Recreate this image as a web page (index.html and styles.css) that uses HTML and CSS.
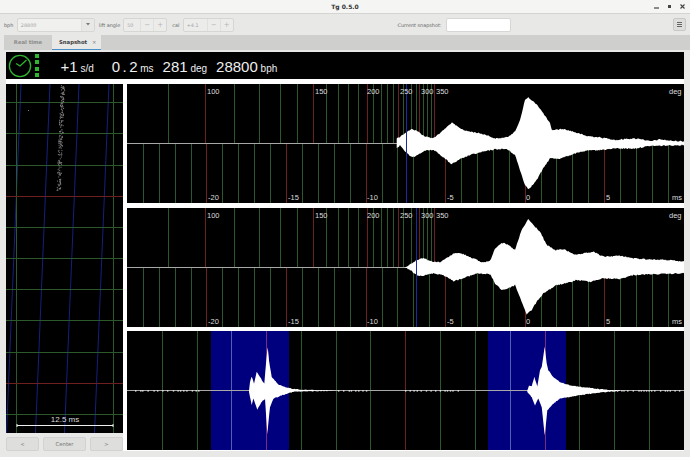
FILE: index.html
```html
<!DOCTYPE html>
<html lang="en">

<head>
    <meta charset="UTF-8">
    <title>Tg 0.5.0</title>
    <link rel="stylesheet" href="styles.css">
</head>

<body>
    <div class="titlebar">
        <span class="title">Tg 0.5.0</span>
        <div class="win-buttons">
            <svg width="5" height="5" viewBox="0 0 5 5"><path d="M0 4H5" stroke="#444" stroke-width="1.2"/></svg>
            <svg width="5" height="5" viewBox="0 0 5 5"><rect x="1" y="1" width="3" height="3" fill="#444"/></svg>
            <svg width="5" height="5" viewBox="0 0 5 5"><path d="M0.5 0.5L4.5 4.5M4.5 0.5L0.5 4.5" stroke="#444" stroke-width="1.1"/></svg>
        </div>
    </div>

    <div class="toolbar">
        <label class="tool-label">bph</label>
        <div class="field combo">
            <span class="field-value">28800</span>
            <span class="field-btn combo-arrow">
                <svg width="4" height="3" viewBox="0 0 4 3"><path d="M0 0H4L2 2.5Z" fill="#777"/></svg>
            </span>
        </div>
        <label class="tool-label lift">lift angle</label>
        <div class="field spin angle">
            <span class="field-value">50</span>
            <span class="field-btn">−</span>
            <span class="field-btn">+</span>
        </div>
        <label class="tool-label cal">cal</label>
        <div class="field spin caldata">
            <span class="field-value">+4.1</span>
            <span class="field-btn">−</span>
            <span class="field-btn">+</span>
        </div>
        <div class="tool-spacer"></div>
        <label class="tool-label">Current snapshot:</label>
        <input class="snapshot-name" type="text">
        <button class="menu-btn">
            <svg width="5" height="5" viewBox="0 0 5 5"><path d="M0 .5H5M0 2.5H5M0 4.5H5" stroke="#666"/></svg>
        </button>
    </div>

    <div class="tabs">
        <div class="tab">Real time</div>
        <div class="tab active">Snapshot <span class="tab-close">×</span></div>
    </div>

    <div class="content">
        <div class="status">
            <svg class="clock" width="24" height="24" viewBox="0 0 24 24">
                <circle cx="12" cy="12" r="10.6" fill="none" stroke="#2fb52f" stroke-width="1.3"/>
                <path d="M8 9.5L12 12L18.5 6" fill="none" stroke="#2fb52f" stroke-width="1.3"/>
            </svg>
            <div class="leds"><i></i><i></i><i></i><i></i></div>
            <div class="reading rate"><b>+1</b> s/d</div>
            <div class="reading beat"><b class="spaced">0.<span class="last">2</span></b> ms</div>
            <div class="reading amp"><b>281</b> deg</div>
            <div class="reading bph"><b>28800</b> bph</div>
        </div>

        <div class="scopes">
            <div class="paper-col">
                <svg class="paper" id="paper" width="117" height="349" viewBox="0 0 117 349">
                    <g id="paperGrid"></g>
                    <text class="scale-text" x="59" y="338" text-anchor="middle">12.5 ms</text>
                    <path d="M11 341.5H107M11 340V343M107 340V343" stroke="#eee" fill="none"/>
                </svg>
                <div class="paper-buttons">
                    <button class="paper-btn side">&lt;</button>
                    <button class="paper-btn center">Center</button>
                    <button class="paper-btn side">&gt;</button>
                </div>
            </div>

            <div class="wave-col">
                <svg class="scope" id="wave1" width="557" height="119" viewBox="127 84 557 119">
                    <g class="labels">
                        <text x="207" y="94">100</text>
                        <text x="315" y="94">150</text>
                        <text x="367" y="94">200</text>
                        <text x="400" y="94">250</text>
                        <text x="421" y="94">300</text>
                        <text x="436" y="94">350</text>
                        <text x="669" y="94">deg</text>
                        <text x="208" y="200">-20</text>
                        <text x="288" y="200">-15</text>
                        <text x="367" y="200">-10</text>
                        <text x="447" y="200">-5</text>
                        <text x="526" y="200">0</text>
                        <text x="606" y="200">5</text>
                        <text x="672" y="200">ms</text>
                    </g>
                </svg>
                <svg class="scope" id="wave2" width="557" height="119" viewBox="127 208 557 119">
                    <g class="labels">
                        <text x="207" y="218">100</text>
                        <text x="315" y="218">150</text>
                        <text x="367" y="218">200</text>
                        <text x="400" y="218">250</text>
                        <text x="421" y="218">300</text>
                        <text x="436" y="218">350</text>
                        <text x="669" y="218">deg</text>
                        <text x="208" y="324">-20</text>
                        <text x="288" y="324">-15</text>
                        <text x="367" y="324">-10</text>
                        <text x="447" y="324">-5</text>
                        <text x="526" y="324">0</text>
                        <text x="606" y="324">5</text>
                        <text x="672" y="324">ms</text>
                    </g>
                </svg>
                <svg class="scope" id="wave3" width="557" height="119" viewBox="127 331 557 119"></svg>
            </div>
        </div>
    </div>

    <script src="scope.js"></script>
</body>

</html>
```

FILE: styles.css
```css
body,
html {
    margin: 0;
    padding: 0;
    height: 100%;
    background: #e8e8e7;
    overflow: hidden;
    font-family: "DejaVu Sans", sans-serif;
    font-size: 4.9px;
    color: #555;
}

.titlebar {
    height: 13px;
    background: #f5f5f4;
    border-bottom: 1px solid #d4d4d2;
    display: flex;
    align-items: center;
    justify-content: center;
    position: relative;
}

.title {
    font-weight: bold;
    font-size: 6px;
    color: #333;
}

.win-buttons {
    position: absolute;
    right: 5px;
    top: 4px;
    display: flex;
    gap: 8px;
}

.toolbar {
    height: 21px;
    display: flex;
    align-items: center;
    padding: 0 4px;
    box-sizing: border-box;
}

.tool-label {
    color: #666;
    margin-right: 3.5px;
    white-space: nowrap;
}

.tool-label.lift {
    margin-left: 4px;
    margin-right: 3px;
}

.tool-label.cal {
    margin-left: 5px;
}

.field {
    height: 14px;
    box-sizing: border-box;
    border: 1px solid #d6d6d4;
    border-radius: 2px;
    background: #ececeb;
    display: flex;
    align-items: center;
    color: #a4a4a4;
}

.field-value {
    flex: 1;
    padding-left: 3px;
}

.field-btn {
    width: 12px;
    height: 100%;
    display: flex;
    align-items: center;
    justify-content: center;
    border-left: 1px solid #e0e0de;
    font-size: 7px;
    color: #b4b4b4;
}

.combo {
    width: 78px;
    background: #f0f0ef;
}

.combo-arrow {
    background: #e8e8e7;
}

.angle {
    width: 44px;
}

.caldata {
    width: 51px;
}

.tool-spacer {
    flex: 1;
}

.snapshot-name {
    width: 65px;
    height: 14px;
    box-sizing: border-box;
    border: 1px solid #d6d6d4;
    border-radius: 2px;
    background: #fff;
    padding: 0;
    margin: 0 162px 0 1px;
}

.menu-btn {
    width: 13px;
    height: 13px;
    padding: 0;
    border: 1px solid #c8c8c6;
    border-radius: 2px;
    background: #dededc;
    display: flex;
    align-items: center;
    justify-content: center;
}

.tabs {
    height: 15px;
    margin-left: 4px;
    background: #cfcfcd;
    display: flex;
    font-size: 5.3px;
}

.tab {
    width: 48px;
    box-sizing: border-box;
    text-align: center;
    line-height: 14px;
    font-weight: bold;
    color: #8c8c8c;
}

.tab.active {
    width: 49px;
    background: #e8e8e7;
    border-bottom: 1px solid #4a8fc8;
    color: #3c3c3c;
    text-align: left;
    padding-left: 7px;
}

.tab-close {
    margin-left: 3px;
    font-weight: normal;
    color: #888;
}

.content {
    padding: 2px 6px 0;
}

.status {
    height: 27px;
    background: #000;
    display: flex;
    align-items: center;
    color: #eee;
    font-family: "Liberation Sans", sans-serif;
    font-size: 10px;
}

.clock {
    margin-left: 2px;
}

.leds {
    margin-left: 3px;
    display: flex;
    flex-direction: column;
    gap: 2.4px;
}

.leds i {
    display: block;
    width: 4px;
    height: 4px;
    background: #2fb52f;
}

.reading {
    white-space: nowrap;
    padding-top: 1px;
}

.reading b {
    font-weight: normal;
    font-size: 15px;
}

.rate {
    margin-left: 21.6px;
}

.beat {
    margin-left: 18px;
}

.amp {
    margin-left: 9px;
}

.bph {
    margin-left: 9px;
}

.spaced {
    letter-spacing: 2.4px;
}

.spaced .last {
    letter-spacing: 0;
}

.scopes {
    display: flex;
    gap: 4px;
    background: #fff;
    padding-top: 5px;
}

.paper-col {
    width: 117px;
}

.paper,
.scope {
    display: block;
    background: #000;
}

.paper-buttons {
    display: flex;
    gap: 4px;
    padding-top: 4px;
    background: #e8e8e7;
}

.paper-btn {
    height: 14px;
    padding: 0;
    border: 1px solid #d2d2d0;
    border-radius: 2px;
    background: #dededc;
    font-family: "DejaVu Sans", sans-serif;
    font-size: 5.3px;
    color: #777;
}

.paper-btn.side {
    width: 33px;
}

.paper-btn.center {
    width: 43px;
}

.wave-col {
    display: flex;
    flex-direction: column;
    gap: 5px;
}

.wave-col .scope:last-child {
    margin-top: -1px;
}

.labels text,
.scale-text {
    font-family: "Liberation Sans", sans-serif;
    font-size: 7.5px;
    fill: #dcdcdc;
}

.scale-text {
    font-size: 8px;
}

.grid-line {
    fill: none;
    stroke-width: 1;
    shape-rendering: crispEdges;
}

.green {
    stroke: #2c592c;
}

.red {
    stroke: #6c2020;
}

.blue {
    stroke: #1c2aa0;
}

.over-green {
    stroke: #4a62b4;
}

.over-red {
    stroke: #7a2a80;
}

.slant {
    stroke: #14207e;
    shape-rendering: auto;
}

.axis {
    stroke: #a8a8a8;
    shape-rendering: crispEdges;
}

.trace {
    fill: #fff;
}

.speck {
    fill: #ddd;
}

.dot {
    fill: #808080;
}
```

FILE: scope.js
```js
const NS = 'http://www.w3.org/2000/svg';

// small repeatable noise so the traces look the same on every load
let seed = 12345;
function rnd() {
    seed = (seed * 1103515245 + 12345) % 2147483648;
    return seed / 2147483648;
}

function add(parent, tag, attrs, before) {
    const el = document.createElementNS(NS, tag);
    Object.keys(attrs).forEach((k) => el.setAttribute(k, attrs[k]));
    parent.insertBefore(el, before || null);
    return el;
}

function vlines(xs, y1, y2) {
    return xs.map((x) => `M${x + 0.5} ${y1}V${y2}`).join('');
}

// interpolate an envelope given as [x, y] pairs, with some jitter
function envelope(points, step, jitter) {
    const out = [];
    for (let i = 0; i < points.length - 1; i++) {
        const [x0, y0] = points[i];
        const [x1, y1] = points[i + 1];
        for (let x = x0; x < x1; x += step) {
            const y = y0 + (y1 - y0) * (x - x0) / (x1 - x0);
            out.push([x, y + (rnd() - 0.5) * jitter]);
        }
    }
    out.push(points[points.length - 1]);
    return out;
}

function tracePath(upper, lower, jitter) {
    const top = envelope(upper, 1, jitter);
    const bottom = envelope(lower, 1, jitter).reverse();
    return 'M' + top.concat(bottom).map((p) => p[0].toFixed(1) + ' ' + p[1].toFixed(1)).join('L') + 'Z';
}

// reference envelopes were read off in 3x zoom coordinates
function zoomed(points, ox, oy) {
    return points.map((p) => [ox + p[0] / 3, oy + p[1] / 3]);
}

const degGreen = [168, 234, 259, 280, 297, 326, 338, 348, 358, 373, 381, 387, 393, 403, 411, 416, 423, 427, 431];
const degRed = [205, 313, 367, 398, 419, 434];
const msGreen = [143, 159, 175, 191, 222, 238, 254, 270, 302, 318, 334, 350, 382, 397, 413, 429, 461, 477, 493, 509, 541, 556, 572, 588, 620, 636, 652, 668];
const msRed = [206, 286, 366, 445, 525, 604];

function drawWave(id, top, mid, bottom, blueX, upper, lower) {
    const svg = document.getElementById(id);
    const labels = svg.querySelector('.labels');
    add(svg, 'path', { class: 'grid-line green', d: vlines(degGreen, top, mid) + vlines(msGreen, mid, bottom) }, labels);
    add(svg, 'path', { class: 'grid-line red', d: vlines(degRed, top, mid) + vlines(msRed, mid, bottom) }, labels);
    add(svg, 'path', { class: 'axis', d: `M127 ${mid + 0.5}H684` }, labels);
    add(svg, 'path', { class: 'trace', d: tracePath(upper, lower, 1.2) }, labels);
    add(svg, 'path', { class: 'grid-line blue', d: vlines([blueX], top, bottom) }, labels);
}

drawWave('wave1', 84, 143, 203, 406,
    [[396.7, 143]].concat(zoomed([[-10, 175], [0, 170], [20, 155], [38, 147], [55, 155], [75, 170], [100, 174], [125, 155], [155, 128], [180, 145], [200, 153], [230, 158], [260, 165], [285, 176], [320, 172], [345, 155], [360, 120], [375, 60], [385, 52], [395, 62], [410, 72], [430, 100], [450, 130], [455, 150], [490, 147], [520, 155], [560, 168], [600, 172], [650, 180], [680, 176], [720, 176], [750, 184], [780, 178], [810, 182], [852, 184]], 400, 80)),
    [[396.7, 144]].concat(zoomed([[-10, 205], [0, 195], [20, 220], [38, 233], [55, 222], [80, 210], [105, 212], [130, 232], [155, 253], [180, 238], [210, 225], [250, 215], [285, 208], [320, 207], [345, 225], [360, 270], [375, 315], [385, 327], [395, 318], [410, 300], [430, 265], [450, 235], [480, 236], [520, 222], [560, 212], [600, 210], [650, 205], [700, 206], [750, 198], [852, 195]], 400, 80)));

drawWave('wave2', 208, 267, 327, 416,
    zoomed([[15, 187], [30, 178], [50, 165], [70, 158], [90, 168], [120, 172], [165, 143], [190, 147], [220, 160], [245, 172], [270, 168], [285, 130], [305, 113], [325, 120], [345, 135], [365, 75], [385, 42], [400, 60], [420, 80], [440, 120], [465, 135], [490, 133], [530, 150], [580, 140], [610, 155], [660, 152], [700, 160], [750, 163], [800, 165], [852, 170]], 400, 205),
    zoomed([[15, 187], [30, 195], [50, 210], [70, 212], [100, 205], [130, 210], [160, 228], [190, 220], [230, 205], [270, 208], [285, 235], [305, 255], [325, 250], [345, 240], [365, 290], [380, 328], [395, 315], [410, 290], [430, 265], [470, 240], [500, 235], [530, 225], [570, 230], [610, 220], [660, 222], [700, 210], [750, 208], [852, 205]], 400, 205));

// event panel
const wave3 = document.getElementById('wave3');
add(wave3, 'rect', { x: 211, y: 331, width: 78, height: 119, fill: '#00007f' });
add(wave3, 'rect', { x: 488, y: 331, width: 78, height: 119, fill: '#00007f' });
add(wave3, 'path', { class: 'grid-line green', d: vlines([162, 197, 301, 336, 370, 440, 475, 579, 614, 649], 331, 450) });
add(wave3, 'path', { class: 'grid-line over-green', d: vlines([231, 510], 331, 450) });
add(wave3, 'path', { class: 'grid-line red', d: vlines([405], 331, 450) });
add(wave3, 'path', { class: 'grid-line over-red', d: vlines([266, 545], 331, 450) });
add(wave3, 'path', { class: 'axis', d: 'M127 390.5H684' });
add(wave3, 'path', {
    class: 'trace',
    d: tracePath(
        zoomed([[372, 191], [375, 165], [380, 148], [387, 170], [395, 135], [405, 150], [418, 170], [424, 100], [428, 60], [432, 100], [440, 150], [460, 172], [480, 180], [500, 185], [540, 189], [600, 190], [640, 190.4]], 125, 327),
        zoomed([[372, 195], [380, 235], [385, 215], [397, 248], [410, 225], [420, 215], [427, 322], [435, 240], [445, 215], [470, 205], [490, 198], [510, 194], [600, 192], [640, 191]], 125, 327), 0.8)
});
add(wave3, 'path', {
    class: 'trace',
    d: tracePath(
        zoomed([[382, 191], [387, 175], [395, 178], [403, 150], [412, 178], [420, 130], [425, 120], [434, 58], [440, 110], [445, 130], [460, 150], [480, 165], [510, 175], [560, 182], [620, 188], [660, 189.5]], 400, 327),
        zoomed([[382, 195], [395, 210], [405, 235], [415, 215], [425, 240], [434, 325], [442, 250], [460, 230], [480, 215], [520, 208], [570, 200], [620, 195], [660, 192]], 400, 327), 0.8)
});
// the tails break up into single specks
[[338, 370], [613, 684], [135, 200], [405, 460]].forEach(([from, to]) => {
    for (let x = from; x < to; x += 2 + rnd() * 4) {
        add(wave3, 'rect', { class: 'speck', x: x.toFixed(1), y: 390, width: 1.4, height: 1.6 });
    }
});

// paper strip: local coords, page offset is (6, 84)
const paperGrid = document.getElementById('paperGrid');
const rows = [18, 49, 81, 143, 174, 205, 236, 268, 330];
let gridD = rows.map((y) => `M0 ${y + 0.5}H117`).join('');
gridD += 'M10.5 0V349M107.5 0V349';
[15, 44, 73, 103].forEach((x) => {
    add(paperGrid, 'path', { class: 'grid-line slant', d: `M${x} 0L${x - 14.5} 349` });
});
add(paperGrid, 'path', { class: 'grid-line green', d: gridD });
add(paperGrid, 'path', { class: 'grid-line red', d: 'M0 112.5H117M0 299.5H117' });
for (let i = 0; i < 200; i++) {
    const y = 1 + rnd() * 106;
    const x = 56.5 - y * 0.04 + (rnd() - 0.5) * 4;
    add(paperGrid, 'rect', { class: 'dot', x: x.toFixed(1), y: y.toFixed(1), width: 1, height: 1 });
}
add(paperGrid, 'rect', { class: 'dot', x: 22, y: 26, width: 1, height: 1 });
```
